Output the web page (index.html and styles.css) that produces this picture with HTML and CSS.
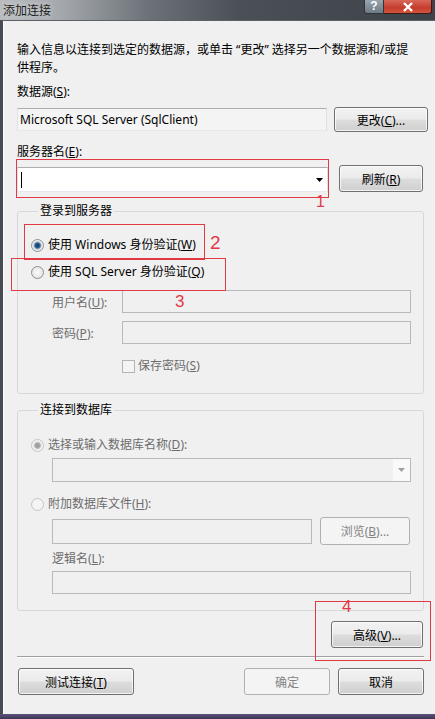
FILE: index.html
```html
<!DOCTYPE html>
<html lang="zh-CN">
<head>
  <meta charset="UTF-8" />
  <meta name="viewport" content="width=device-width, initial-scale=1.0"/>
  <title>添加连接</title>
  <link rel="stylesheet" href="styles.css">
</head>
<body>

  <div class="window">
    <div class="titlebar">
      <span class="title">添加连接</span>
      <div class="caption-btns">
        <span class="cap-help">?</span>
        <span class="cap-close">
          <svg width="12" height="10" viewBox="0 0 12 10"><path d="M2 1 L10 9 M10 1 L2 9" stroke="#fff" stroke-width="2.4"/></svg>
        </span>
      </div>
    </div>

    <div class="client">
      <p class="intro">输入信息以连接到选定的数据源，或单击 “更改” 选择另一个数据源和/或提<br>供程序。</p>

      <div class="label lbl-source">数据源(<u>S</u>):</div>
      <div class="row row-source">
        <div class="field readonly">Microsoft SQL Server (SqlClient)</div>
        <button class="btn btn-change">更改(<u>C</u>)...</button>
      </div>

      <div class="label lbl-server">服务器名(<u>E</u>):</div>
      <div class="row row-server">
        <div class="field combo">
          <span class="caret"></span>
          <span class="arrow"><svg width="7" height="4" viewBox="0 0 7 4"><path d="M0 0 H7 L3.5 4 Z" fill="#000"/></svg></span>
        </div>
        <button class="btn btn-refresh">刷新(<u>R</u>)</button>
      </div>

      <fieldset class="group group-login">
        <legend>登录到服务器</legend>
        <div class="option opt-windows">
          <span class="radio checked"></span>使用 Windows 身份验证(<u>W</u>)
        </div>
        <div class="option opt-sql">
          <span class="radio"></span>使用 SQL Server 身份验证(<u>Q</u>)
        </div>
        <div class="row sub-row row-user">
          <span class="sub-label disabled">用户名(<u>U</u>):</span>
          <div class="field off"></div>
        </div>
        <div class="row sub-row row-pass">
          <span class="sub-label disabled">密码(<u>P</u>):</span>
          <div class="field off"></div>
        </div>
        <div class="check-row disabled">
          <span class="checkbox"></span>保存密码(<u>S</u>)
        </div>
      </fieldset>

      <fieldset class="group group-db">
        <legend>连接到数据库</legend>
        <div class="option disabled opt-dbname">
          <span class="radio checked off"></span>选择或输入数据库名称(<u>D</u>):
        </div>
        <div class="field off db-combo">
          <span class="arrow arrow-off"><svg width="7" height="4" viewBox="0 0 7 4"><path d="M0 0 H7 L3.5 4 Z" fill="#a0a0a0"/></svg></span>
        </div>
        <div class="option disabled opt-attach">
          <span class="radio off"></span>附加数据库文件(<u>H</u>):
        </div>
        <div class="row row-file">
          <div class="field off file-field"></div>
          <button class="btn btn-browse" disabled>浏览(<u>B</u>)...</button>
        </div>
        <div class="label disabled lbl-logical">逻辑名(<u>L</u>):</div>
        <div class="field off logical-field"></div>
      </fieldset>

      <div class="advanced-row">
        <button class="btn btn-advanced">高级(<u>V</u>)...</button>
      </div>

      <div class="separator"></div>

      <div class="footer">
        <button class="btn btn-test">测试连接(<u>T</u>)</button>
        <div class="footer-right">
          <button class="btn btn-ok" disabled>确定</button>
          <button class="btn btn-cancel">取消</button>
        </div>
      </div>
    </div>

    <div class="frame-bottom"></div>

    <!-- annotations drawn over the dialog -->
    <div class="mark mark-1"></div>
    <span class="mark-num num-1">1</span>
    <div class="mark mark-2"></div>
    <span class="mark-num num-2">2</span>
    <div class="mark mark-3"></div>
    <span class="mark-num num-3">3</span>
    <div class="mark mark-4"></div>
    <span class="mark-num num-4">4</span>
  </div>

</body>
</html>
```

FILE: styles.css
```css
body {
  margin: 0;
  font-family: "Noto Sans", "Noto Sans CJK SC", sans-serif;
  font-size: 12px;
  color: #000;
  background: #f0f0f0;
}
u {
  text-decoration: underline;
  text-underline-offset: 1px;
}
.window {
  position: relative;
  width: 435px;
  height: 719px;
  display: flex;
  flex-direction: column;
  overflow: hidden;
}

/* title bar */
.titlebar {
  height: 20px;
  display: flex;
  justify-content: space-between;
  align-items: flex-start;
  background: linear-gradient(to right, #b9bcbf 0%, #a4a8ac 14%, #6c7278 34%, #4a5056 55%, #3d4248 100%);
}
.title {
  font-family: "Noto Sans CJK SC", sans-serif;
  font-size: 12px;
  line-height: 20px;
  padding-left: 3px;
  color: #1b1b1b;
  text-shadow: 0 0 6px rgba(255,255,255,0.7);
}
.caption-btns {
  display: flex;
  margin-right: 3px;
}
.cap-help {
  width: 20px;
  height: 14px;
  box-sizing: border-box;
  border: 1px solid #2f353b;
  border-top: none;
  border-radius: 0 0 0 3px;
  background: linear-gradient(#9aa5ae, #6e7a85);
  color: #fff;
  font-family: "Liberation Sans", sans-serif;
  font-weight: bold;
  font-size: 12px;
  line-height: 12px;
  text-align: center;
}
.cap-close {
  width: 48px;
  height: 14px;
  box-sizing: border-box;
  border: 1px solid #3b1a16;
  border-top: none;
  border-left: none;
  border-radius: 0 0 3px 0;
  background: linear-gradient(#d7685a, #c43c2c 60%, #d2553e);
  display: flex;
  justify-content: center;
  align-items: center;
}

/* client area */
.client {
  flex: 1;
  border-top: 1px solid #5d6268;
  border-left: 3px solid #474c52;
  box-shadow: inset 1px 0 #fbfbfb;
  padding: 20px 7px 0 14px;
}
.intro {
  margin: 0;
  line-height: 18px;
  white-space: nowrap;
}
.label {
  line-height: 18px;
}
.lbl-source {
  margin-top: 6px;
}
.lbl-server {
  margin-top: 11px;
}
.row {
  display: flex;
  align-items: center;
}
.row-source {
  margin-top: 6px;
  gap: 7px;
}
.row-server {
  margin-top: 4px;
  align-items: flex-end;
  gap: 11px;
}

.field {
  box-sizing: border-box;
  height: 23px;
  border: 1px solid;
  border-color: #abadb3 #dbdfe6 #e3e9ef #e2e3ea;
  background: #fff;
}
.field.readonly {
  width: 310px;
  background: #f4f4f4;
  padding-left: 2px;
  line-height: 21px;
}
.field.combo {
  width: 311px;
  height: 25px;
  display: flex;
  align-items: center;
  justify-content: space-between;
  padding: 0 4px 0 3px;
}
.caret {
  width: 1px;
  height: 16px;
  background: #000;
}
.arrow {
  display: flex;
}
.field.off {
  border-color: #b7babd;
  background: #f0f0f0;
}

/* buttons */
.btn {
  box-sizing: border-box;
  height: 27px;
  padding: 0;
  font: inherit;
  color: #000;
  border: 1px solid #707070;
  border-radius: 3px;
  background: linear-gradient(#f2f2f2 0%, #ebebeb 48%, #dddddd 52%, #cfcfcf 100%);
  box-shadow: inset 0 0 0 1px rgba(255,255,255,0.75);
}
.btn:disabled {
  color: #838383;
  border-color: #adb2b5;
  background: #f4f4f4;
  box-shadow: none;
}
.btn-change {
  width: 94px;
  height: 25px;
}
.btn-refresh {
  width: 84px;
}

/* group boxes */
.group {
  margin: 0 4px 0 0;
  border: 1px solid #d5d9dc;
  border-radius: 3px;
  padding: 0 12px 0 13px;
}
.group legend {
  margin-left: 7px;
  padding: 0 2px;
  line-height: 18px;
}
.group-login {
  margin-top: 10px;
  padding-top: 16px;
  padding-bottom: 18px;
}
.group-db {
  margin-top: 7px;
  padding-top: 17px;
  padding-bottom: 16px;
}
.option {
  display: flex;
  align-items: center;
  line-height: 18px;
}
.opt-sql {
  margin-top: 9px;
}
.radio {
  box-sizing: border-box;
  width: 13px;
  height: 13px;
  margin-right: 4px;
  border-radius: 50%;
  border: 1px solid #8e9091;
  background: radial-gradient(circle, #fbfbfb 0, #e4e4e4 6px);
}
.radio.checked {
  background: radial-gradient(circle, #0f3a63 0, #2e6190 2.5px, #9bb6cc 3.5px, #e6e6e6 4.5px, #fbfbfb 6px);
}
.radio.off {
  border-color: #c4c4c4;
  background: #f4f4f4;
}
.radio.checked.off {
  background: radial-gradient(circle, #9a9a9a 0, #a8a8a8 2.5px, #d8d8d8 3.5px, #f4f4f4 4.5px);
}
.disabled {
  color: #6d6d6d;
}
.sub-row {
  margin-left: 21px;
}
.sub-label {
  width: 70px;
}
.sub-row .field {
  width: 289px;
}
.row-user {
  margin-top: 9px;
}
.row-pass {
  margin-top: 8px;
}
.check-row {
  display: flex;
  align-items: center;
  margin: 13px 0 0 91px;
  line-height: 18px;
}
.checkbox {
  box-sizing: border-box;
  width: 13px;
  height: 13px;
  margin-right: 3px;
  border: 1px solid #b4b4b4;
  background: #f4f4f4;
}

.field.db-combo {
  margin: 4px 0 0 21px;
  width: 359px;
  height: 24px;
  display: flex;
  justify-content: flex-end;
}
.arrow-off {
  width: 17px;
  height: 22px;
  align-items: center;
  justify-content: center;
  background: #f9f9f9;
}
.opt-attach {
  margin-top: 13px;
}
.row-file {
  margin: 4px 0 0 21px;
  gap: 8px;
}
.field.file-field {
  width: 260px;
  height: 25px;
}
.btn-browse {
  width: 90px;
  height: 28px;
}
.lbl-logical {
  margin: 5px 0 0 21px;
}
.field.logical-field {
  margin: 3px 0 0 21px;
  width: 359px;
}

.advanced-row {
  display: flex;
  justify-content: flex-end;
  margin: 10px 5px 0 0;
}
.btn-advanced {
  width: 92px;
}
.separator {
  margin: 8px 4px 0 0;
  height: 1px;
  background: #a0a0a0;
  box-shadow: 0 1px #fff;
}
.footer {
  display: flex;
  justify-content: space-between;
  margin: 11px 4px 0 1px;
}
.footer-right {
  display: flex;
  gap: 8px;
}
.btn-test {
  width: 116px;
}
.btn-ok, .btn-cancel {
  width: 86px;
}

.frame-bottom {
  height: 5px;
  background: linear-gradient(#5c5178, #3d3458);
}

/* red annotations */
.mark {
  position: absolute;
  border: 1px solid #e23a45;
}
.mark-num {
  position: absolute;
  color: #e23a45;
  font-family: "Liberation Sans", sans-serif;
  line-height: 1;
}
.mark-1 { left: 16px; top: 159px; width: 311px; height: 37px; }
.num-1 { left: 316px; top: 194px; font-size: 16px; }
.mark-2 { left: 24px; top: 224px; width: 179px; height: 34px; }
.num-2 { left: 210px; top: 233px; font-size: 19px; }
.mark-3 { left: 11px; top: 258px; width: 213px; height: 31px; }
.num-3 { left: 175px; top: 293px; font-size: 17px; }
.mark-4 { left: 315px; top: 601px; width: 114px; height: 58px; }
.num-4 { left: 342px; top: 598px; font-size: 17px; }
```
